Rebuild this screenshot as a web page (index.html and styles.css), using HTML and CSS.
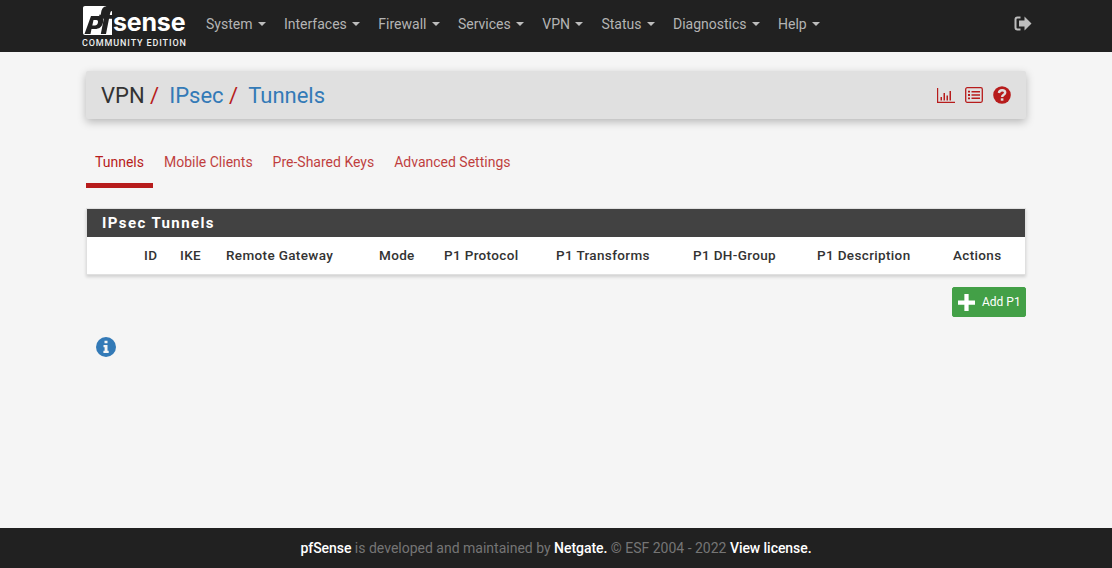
FILE: index.html
```html
<!DOCTYPE html>
<html lang="en">
<head>
<meta charset="utf-8">
<title>pfSense - VPN: IPsec: Tunnels</title>
<link rel="stylesheet" href="styles.css">
</head>
<body>
<header class="navbar">
  <div class="brand">
    <div class="logo-top">
      <svg class="logo-pf" viewBox="0 0 29 29" aria-hidden="true">
        <path fill="#fff" d="M2 0H29V29H2C0.800 29 0 28.200 0 27V2C0 0.800 0.800 0 2 0Z"/>
        <path fill="#212121" fill-rule="evenodd" d="M8 10H15C19 10 21 12 20 16.500C19 21 16 23 12 23H8.500L7.500 28H1.500ZM10.500 14L9.300 19.500H12C13.500 19.500 14.500 18.500 14.900 16.800C15.300 15 14.800 14 13.300 14Z"/>
        <path fill="#212121" d="M29 0H25C21 0 19 2 18.200 6L17.700 8.800H16L17.500 12.800H20.800L17.800 28H23L26 12.800H29V9H26.800L27.100 7.500C27.400 5.800 28 5 29 5Z"/>
      </svg>
      <span class="logo-word">sense</span>
    </div>
    <div class="logo-sub">COMMUNITY EDITION</div>
  </div>
  <nav class="menu">
    <a>System<i class="caret"></i></a>
    <a>Interfaces<i class="caret"></i></a>
    <a>Firewall<i class="caret"></i></a>
    <a>Services<i class="caret"></i></a>
    <a>VPN<i class="caret"></i></a>
    <a>Status<i class="caret"></i></a>
    <a>Diagnostics<i class="caret"></i></a>
    <a>Help<i class="caret"></i></a>
  </nav>
  <svg class="logout" viewBox="0 0 18 15" aria-hidden="true">
    <path fill="none" stroke="currentColor" stroke-width="2" d="M6.500 1.500H3.500C2.200 1.500 1.500 2.200 1.500 3.500V11.500C1.500 12.800 2.200 13.500 3.500 13.500H6.500"/>
    <path fill="currentColor" d="M10.500 0.500L17.500 7.500L10.500 14.500V10.500H5V4.500H10.500Z"/>
  </svg>
</header>

<main class="content">
  <div class="crumbs">
    <h1 class="trail">
      <span>VPN</span><span class="sep">/</span><a>IPsec</a><span class="sep">/</span><a>Tunnels</a>
    </h1>
    <div class="crumb-icons">
      <svg class="ci ci-chart" viewBox="0 0 18 15" aria-hidden="true">
        <path fill="none" stroke="currentColor" stroke-width="1.200" d="M0.600 0V14.400H18"/>
        <path fill="currentColor" d="M3.500 9H5V12.500H3.500ZM6.500 5H8V12.500H6.500ZM9.500 7.500H11V12.500H9.500ZM12.500 3H14V12.500H12.500Z"/>
      </svg>
      <svg class="ci ci-list" viewBox="0 0 18 16" aria-hidden="true">
        <rect x="0.700" y="0.700" width="16.600" height="14.600" rx="1.500" fill="none" stroke="currentColor" stroke-width="1.300"/>
        <path fill="currentColor" d="M3 3.800H5V5.600H3ZM3 7.100H5V8.900H3ZM3 10.400H5V12.200H3ZM6.500 4H15V5.400H6.500ZM6.500 7.300H15V8.700H6.500ZM6.500 10.600H15V12H6.500Z"/>
      </svg>
      <svg class="ci ci-help" viewBox="0 0 18 18" aria-hidden="true">
        <circle cx="9" cy="9" r="8.800" fill="currentColor"/>
        <path fill="none" stroke="#e0e0e0" stroke-width="2.400" d="M5.900 7C6.200 5.200 7.400 4.300 9.100 4.300C10.900 4.300 12.200 5.300 12.200 6.800C12.200 8.800 9.100 8.900 9.100 11"/>
        <rect x="7.800" y="12.300" width="2.600" height="2.400" fill="#e0e0e0"/>
      </svg>
    </div>
  </div>

  <ul class="tabs">
    <li class="tab active">Tunnels</li>
    <li class="tab">Mobile Clients</li>
    <li class="tab">Pre-Shared Keys</li>
    <li class="tab">Advanced Settings</li>
  </ul>

  <section class="panel">
    <h2 class="panel-head">IPsec Tunnels</h2>
    <div class="table-row">
      <span class="col c-id">ID</span>
      <span class="col c-ike">IKE</span>
      <span class="col c-gw">Remote Gateway</span>
      <span class="col c-mode">Mode</span>
      <span class="col c-proto">P1 Protocol</span>
      <span class="col c-trans">P1 Transforms</span>
      <span class="col c-dh">P1 DH-Group</span>
      <span class="col c-desc">P1 Description</span>
      <span class="col c-act">Actions</span>
    </div>
  </section>

  <div class="actions">
    <button class="btn-add" type="button">
      <svg class="plus" viewBox="0 0 16 16" aria-hidden="true">
        <path fill="#fff" d="M6 0H10V6H16V10H10V16H6V10H0V6H6Z"/>
      </svg>
      <span>Add P1</span>
    </button>
  </div>

  <svg class="info" viewBox="0 0 20 20" aria-hidden="true">
    <circle cx="10" cy="10" r="10" fill="#337ab7"/>
    <path fill="#f5f5f5" d="M8.500 3.800H11.500V6.300H8.500ZM7.500 8H11.500V13.800H12.700V16H7.400V13.800H8.600V10.200H7.500Z"/>
  </svg>
</main>

<footer class="footer">
  <b>pfSense</b><span>&nbsp;is developed and maintained by&nbsp;</span><b>Netgate.</b><span>&nbsp;© ESF 2004 - 2022&nbsp;</span><b>View license.</b>
</footer>
</body>
</html>
```

FILE: styles.css
```css
* { box-sizing: border-box; }
html, body { height: 100%; }
body {
  margin: 0;
  background: #f5f5f5;
  font-family: Roboto, "Liberation Sans", sans-serif;
  font-size: 14px;
  color: #333;
  display: flex;
  flex-direction: column;
  overflow: hidden;
}
.navbar {
  height: 52px;
  flex: none;
  background: #212121;
  display: flex;
  align-items: center;
  padding: 0 80px 0 82px;
}
.brand { width: 105px; height: 46px; margin-top: 2px; flex: none; }
.logo-top { display: flex; align-items: flex-end; height: 31px; padding-left: 1px; }
.logo-pf { width: 29px; height: 29px; display: block; }
.logo-word {
  font-family: Inter, Roboto, sans-serif;
  font-weight: 700;
  font-size: 25px;
  line-height: 24px;
  color: #fff;
  letter-spacing: -0.2px;
  margin-left: 1px;
  margin-bottom: 1px;
}
.logo-sub {
  font-size: 9px;
  line-height: 11px;
  font-weight: 500;
  letter-spacing: 0.88px;
  color: #eee;
  white-space: nowrap;
  margin-top: 3px;
}
.menu { display: flex; margin-left: 10px; flex: 1; margin-top: -4px; }
.menu a {
  color: #b4b4b4;
  padding: 0 9px;
  line-height: 20px;
  font-size: 14px;
  display: flex;
  align-items: center;
}
.caret {
  width: 0;
  height: 0;
  margin-left: 5.500px;
  border-top: 4px solid #bdbdbd;
  border-left: 4px solid transparent;
  border-right: 4px solid transparent;
}
.logout { width: 18px; height: 15px; color: #bdbdbd; margin-top: -6px; }
.content { flex: 1; padding: 19px 86px 0; min-height: 0; }
.crumbs {
  height: 48px;
  background: #e0e0e0;
  border-radius: 2px;
  box-shadow: 0 3px 8px rgba(0,0,0,.25);
  display: flex;
  align-items: center;
  justify-content: space-between;
  padding: 0 15px;
}
.trail {
  margin: 0;
  font-size: 22px;
  font-weight: 400;
  display: flex;
  color: #333;
}
.trail a { color: #337ab7; }
.sep { color: #b71c1c; margin: 0 10px 0 5.500px; }
.crumb-icons { display: flex; align-items: center; }
.ci { display: block; color: #b71c1c; }
.ci-chart { width: 18px; height: 15px; margin-right: 10px; }
.ci-list { width: 18px; height: 16px; margin-right: 10px; }
.ci-help { width: 18px; height: 18px; }
.tabs {
  list-style: none;
  margin: 20px 0 0;
  padding: 0;
  display: flex;
  height: 49px;
}
.tab {
  color: #b71c1c;
  opacity: .85;
  padding: 13px 10px 0 9px;
  margin-right: 1px;
  font-size: 14px;
  line-height: 20px;
}
.tab.active { border-bottom: 5px solid #b71c1c; padding: 13px 9px 0; margin-right: 2px; opacity: 1; }
.panel {
  margin-top: 20px;
  background: #fff;
  border: 1px solid #e0e0e0;
  box-shadow: 0 2px 3px rgba(0,0,0,.15);
  height: 67px;
}
.panel-head {
  margin: 0;
  height: 28px;
  background: #424242;
  color: #fff;
  font-size: 15px;
  font-weight: 700;
  letter-spacing: 1.400px;
  line-height: 28px;
  padding-left: 15px;
}
.table-row {
  height: 37px;
  display: grid;
  grid-template-columns: 57px 36px 46px 153px 65px 112px 137px 124px 136px 72px;
  align-items: center;
  font-weight: 500;
  font-size: 13.500px;
  letter-spacing: 0.350px;
  color: #333;
  padding-bottom: 1px;
}
.col { white-space: nowrap; }
.c-id { grid-column: 2; }
.c-ike { grid-column: 3; }
.c-gw { grid-column: 4; }
.c-mode { grid-column: 5; }
.c-proto { grid-column: 6; }
.c-trans { grid-column: 7; }
.c-dh { grid-column: 8; }
.c-desc { grid-column: 9; }
.c-act { grid-column: 10; }
.actions { display: flex; justify-content: flex-end; margin-top: 12px; }
.btn-add {
  width: 74px;
  height: 30px;
  background: #43a047;
  border: 1px solid #43a047;
  border-radius: 2px;
  color: #fff;
  display: flex;
  align-items: center;
  padding: 0 0 0 5px;
  font-family: inherit;
  font-size: 12px;
}
.btn-add span { margin-left: 7px; }
.plus { width: 17px; height: 17px; display: block; }
.info { width: 20px; height: 20px; display: block; margin: 20px 0 0 10px; }
.footer {
  height: 40px;
  flex: none;
  background: #212121;
  color: #757575;
  display: flex;
  align-items: center;
  justify-content: center;
  font-size: 14px;
}
.footer b { color: #fff; font-weight: 500; letter-spacing: -0.060px; }
```
